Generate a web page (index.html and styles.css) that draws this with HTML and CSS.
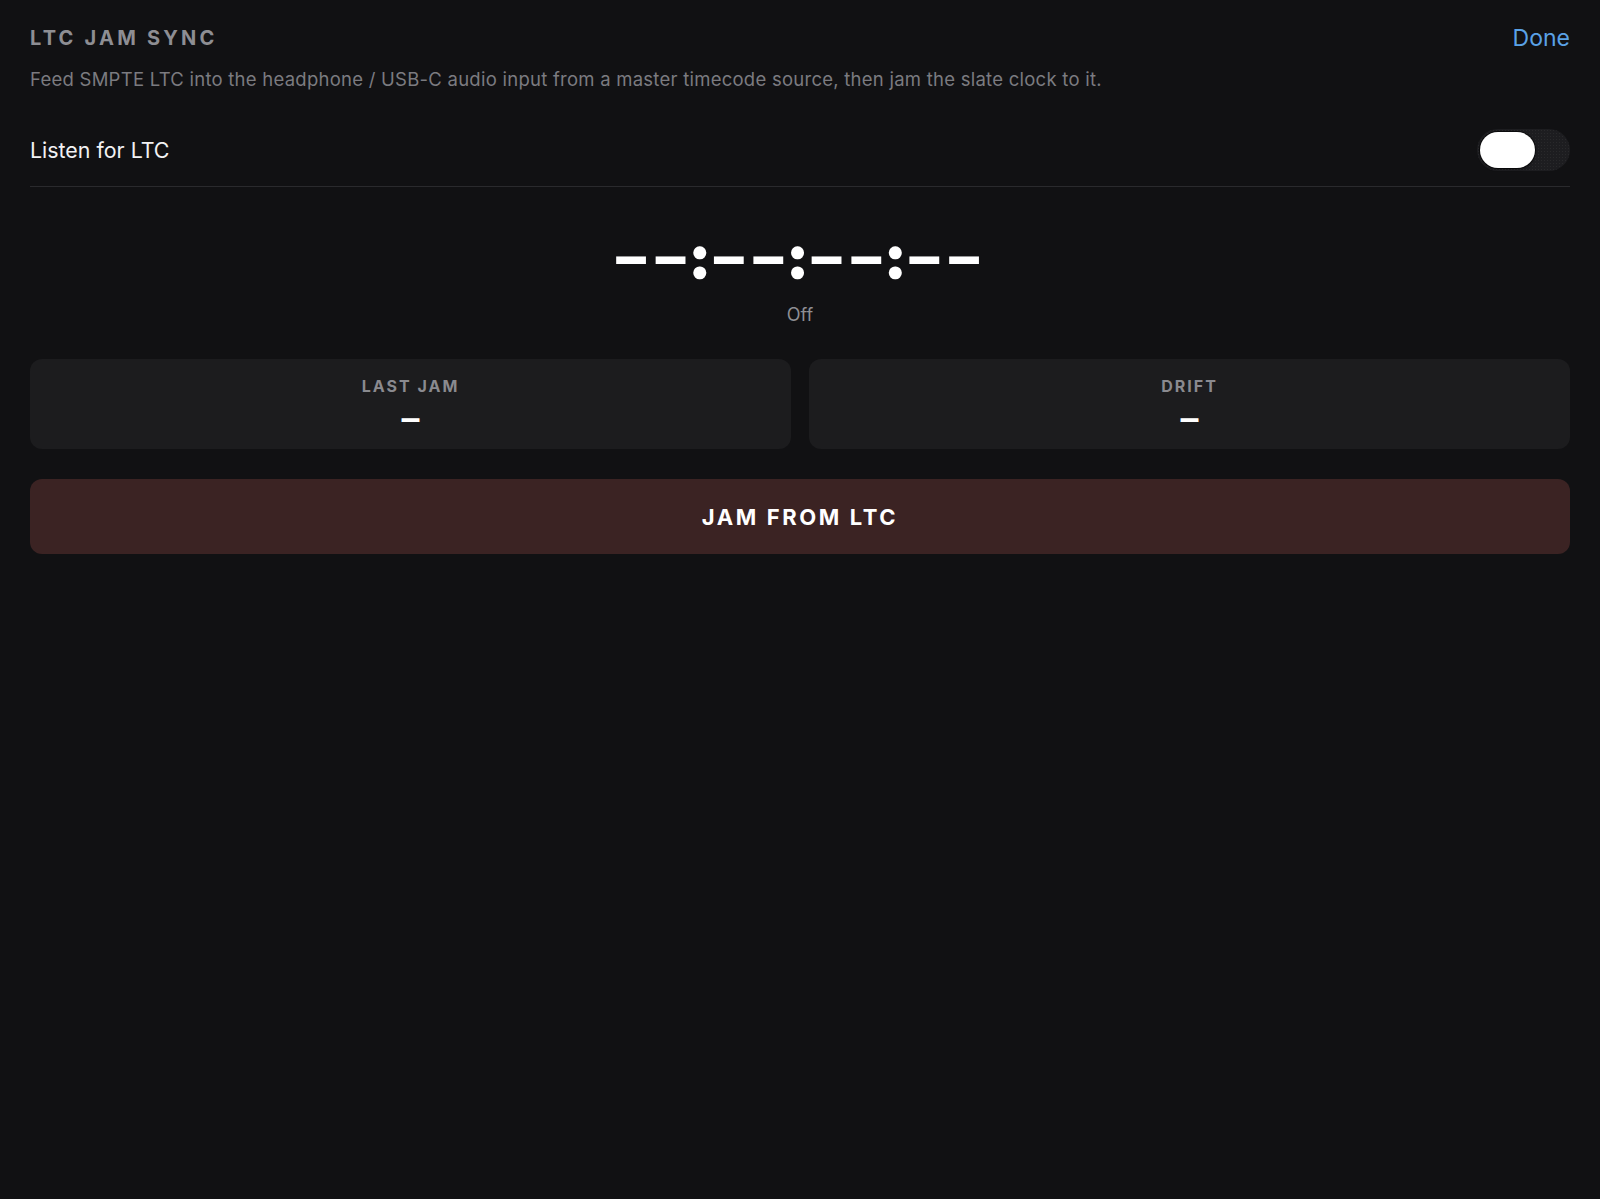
FILE: index.html
```html
<!DOCTYPE html>
<html lang="en">
<head>
    <meta charset="UTF-8">
    <meta name="viewport" content="width=device-width, initial-scale=1.0">
    <title>LTC Jam Sync</title>
    <link rel="stylesheet" href="styles.css">
</head>
<body>

<div class="sheet">
    <header class="sheet-head">
        <h1 class="sheet-title">LTC JAM SYNC</h1>
        <button class="done-btn">Done</button>
    </header>

    <p class="sheet-desc">Feed SMPTE LTC into the headphone / USB-C audio input from a master timecode source, then jam the slate clock to it.</p>

    <div class="toggle-row">
        <span class="toggle-label">Listen for LTC</span>
        <span class="switch"><span class="knob"></span></span>
    </div>

    <!-- HH:MM:SS:FF, dashes until a signal is locked -->
    <div class="timecode">
        <span class="tc-pair"><span>–</span><span>–</span></span>
        <span class="tc-colon">:</span>
        <span class="tc-pair"><span>–</span><span>–</span></span>
        <span class="tc-colon">:</span>
        <span class="tc-pair"><span>–</span><span>–</span></span>
        <span class="tc-colon">:</span>
        <span class="tc-pair"><span>–</span><span>–</span></span>
    </div>
    <div class="tc-status">Off</div>

    <div class="stats">
        <div class="stat">
            <div class="stat-label">LAST JAM</div>
            <div class="stat-value">–</div>
        </div>
        <div class="stat">
            <div class="stat-label">DRIFT</div>
            <div class="stat-value">–</div>
        </div>
    </div>

    <button class="jam-btn">JAM FROM LTC</button>
</div>

</body>
</html>
```

FILE: styles.css
```css
/* LTC jam sync sheet - dark theme */
body {
    margin: 0;
    background-color: #111113;
    font-family: 'Inter', 'Liberation Sans', sans-serif;
    color: #fff;
    min-height: 1199px;
}

.sheet {
    padding: 24px 30px 0 30px;
}

.sheet-head {
    display: flex;
    justify-content: space-between;
    align-items: flex-start;
}

.sheet-title {
    margin: 1.5px 0 0 0;
    font-size: 20px;
    line-height: 24px;
    font-weight: 700;
    letter-spacing: 3.2px;
    color: #8e8e93;
}

.done-btn {
    background: none;
    border: none;
    padding: 0;
    font-family: inherit;
    font-size: 23px;
    line-height: 28px;
    color: #5aa2e6;
    cursor: pointer;
}

.sheet-desc {
    margin: 15px 0 0 0;
    font-size: 18.5px;
    line-height: 24px;
    letter-spacing: 0.25px;
    color: #7b7b80;
}

/* Listen toggle */
.toggle-row {
    margin-top: 23.5px;
    height: 71px;
    display: flex;
    align-items: center;
    justify-content: space-between;
    border-bottom: 1px solid #2a2a2d;
}

.toggle-label {
    font-size: 21.4px;
    line-height: 26px;
    color: #f2f2f4;
}

.switch {
    width: 93px;
    height: 42px;
    border-radius: 21px;
    background-color: #1d1d20;
    background-image: radial-gradient(rgba(255, 255, 255, 0.05) 0.6px, transparent 0.8px);
    background-size: 3px 3px;
    display: flex;
    align-items: center;
    padding-left: 3px;
    box-sizing: border-box;
}

.knob {
    width: 55px;
    height: 36px;
    border-radius: 18px;
    background: #fff;
    box-shadow: 0 0 0 1px rgba(0, 0, 0, 0.6), 0 1px 3px rgba(0, 0, 0, 0.4);
}

/* Timecode readout */
.timecode {
    margin-top: 39.5px;
    padding-right: 5px;
    display: flex;
    justify-content: center;
    align-items: flex-start;
    height: 59px;
    color: #fff;
}

.tc-pair {
    display: flex;
    gap: 8.5px;
    font-family: 'Liberation Sans', sans-serif;
    font-weight: 700;
    font-size: 56px;
    line-height: 59px;
    -webkit-text-stroke: 2px #fff;
}

.tc-colon {
    font-family: 'Inter', sans-serif;
    font-weight: 800;
    font-size: 57px;
    line-height: 62px;
    width: 27px;
    text-align: center;
    -webkit-text-stroke: 2.5px #fff;
}

.tc-status {
    margin-top: 18px;
    text-align: center;
    font-size: 18px;
    line-height: 24px;
    color: #8e8e93;
}

/* Last jam / drift cards */
.stats {
    margin-top: 32px;
    display: grid;
    grid-template-columns: 1fr 1fr;
    gap: 18px;
}

.stat {
    height: 90px;
    box-sizing: border-box;
    padding-top: 17px;
    background-color: #1c1c1e;
    border-radius: 12px;
    text-align: center;
}

.stat-label {
    font-size: 16px;
    line-height: 20px;
    font-weight: 700;
    letter-spacing: 2px;
    color: #8a8a8f;
}

.stat-value {
    margin-top: 4px;
    font-family: 'Liberation Sans', sans-serif;
    font-weight: 700;
    font-size: 36px;
    line-height: 36px;
    color: #fff;
}

.jam-btn {
    display: block;
    width: 100%;
    margin-top: 30px;
    height: 75px;
    border: none;
    border-radius: 12px;
    background-color: #3b2323;
    color: #fff;
    font-family: inherit;
    font-size: 22px;
    font-weight: 700;
    letter-spacing: 2.6px;
    cursor: pointer;
}
```
